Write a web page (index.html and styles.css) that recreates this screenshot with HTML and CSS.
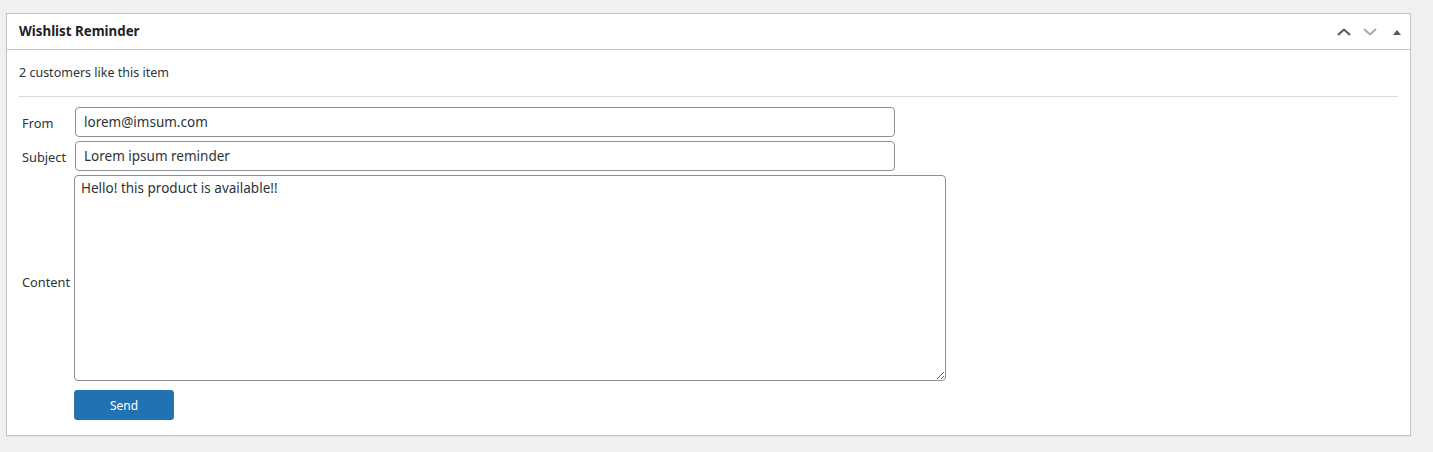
FILE: index.html
```html
<!DOCTYPE html>
<html>
<head>
<meta charset="utf-8">
<link rel="stylesheet" href="styles.css">
</head>
<body>
<div class="postbox">
  <div class="postbox-header">
    <h2 class="hndle">Wishlist Reminder</h2>
    <div class="handle-actions">
      <svg class="ico ico-up" width="16" height="10" viewBox="0 0 16 10"><path d="M2 8 L8 2.5 L14 8" fill="none" stroke="currentColor" stroke-width="2"/></svg>
      <svg class="ico ico-down" width="16" height="10" viewBox="0 0 16 10"><path d="M2 2 L8 7.5 L14 2" fill="none" stroke="currentColor" stroke-width="2"/></svg>
      <svg class="ico ico-toggle" width="10" height="10" viewBox="0 0 10 10"><path d="M1 8 L5 3 L9 8 Z" fill="currentColor"/></svg>
    </div>
  </div>
  <div class="inside">
    <p class="count">2 customers like this item</p>
    <hr class="sep">
    <div class="form-grid">
      <label class="lbl">From</label>
      <input class="field field-short" type="text" value="lorem@imsum.com">
      <label class="lbl">Subject</label>
      <input class="field field-short" type="text" value="Lorem ipsum reminder">
      <label class="lbl lbl-content">Content</label>
      <textarea class="area">Hello! this product is available!!</textarea>
      <span></span>
      <div><button class="btn" type="button">Send</button></div>
    </div>
  </div>
</div>
</body>
</html>
```

FILE: styles.css
```css
html, body {
  margin: 0;
  background: #f0f0f1;
}
body {
  padding: 13px 22px 16px 6px;
  font-family: "Noto Sans", "Open Sans", sans-serif;
  color: #1d2327;
}
.postbox {
  background: #fff;
  border: 1px solid #c3c4c7;
  box-shadow: 0 1px 1px rgba(0,0,0,0.04);
}
.postbox-header {
  height: 35px;
  border-bottom: 1px solid #c3c4c7;
  display: flex;
  align-items: center;
  justify-content: space-between;
}
.hndle {
  margin: 0;
  padding-left: 12px;
  font-size: 13.3px;
  font-weight: 700;
  color: #1d2327;
  line-height: 1.4;
}
.handle-actions {
  display: flex;
  align-items: center;
  gap: 10px;
  padding-right: 8px;
}
.ico { display: block; }
.ico-up { color: #50575e; }
.ico-down { color: #a7aaad; }
.ico-toggle { color: #50575e; margin-left: 4px; }
.inside {
  padding: 0 12px 15px 12px;
}
.count {
  margin: 13px 0 14px;
  font-size: 12.5px;
  line-height: 19px;
  color: #2c3338;
}
.sep {
  border: 0;
  border-top: 1px solid #dcdcde;
  margin: 0 0 10px 0;
}
.form-grid {
  display: grid;
  grid-template-columns: 55px auto;
  row-gap: 4px;
  justify-items: start;
  align-items: center;
}
.lbl {
  font-size: 12.8px;
  color: #2c3338;
  padding-left: 3px;
  padding-top: 2px;
}
.lbl-content { padding-top: 8px; }
.field {
  box-sizing: border-box;
  width: 820px;
  height: 30px;
  margin: 0 1px;
  padding: 0 8px;
  border: 1px solid #8c8f94;
  border-radius: 4px;
  font-family: inherit;
  font-size: 13.5px;
  color: #2c3338;
  background: #fff;
}
.area {
  box-sizing: border-box;
  width: 872px;
  height: 206px;
  padding: 2px 6px;
  border: 1px solid #8c8f94;
  border-radius: 4px;
  font-family: inherit;
  font-size: 13.5px;
  line-height: 20px;
  color: #2c3338;
  resize: both;
}
.btn {
  margin-top: 5px;
  width: 100px;
  height: 30px;
  border: 1px solid #2271b1;
  border-radius: 3px;
  background: #2271b1;
  color: #fff;
  font-family: inherit;
  font-size: 12px;
  padding: 0;
}
```
